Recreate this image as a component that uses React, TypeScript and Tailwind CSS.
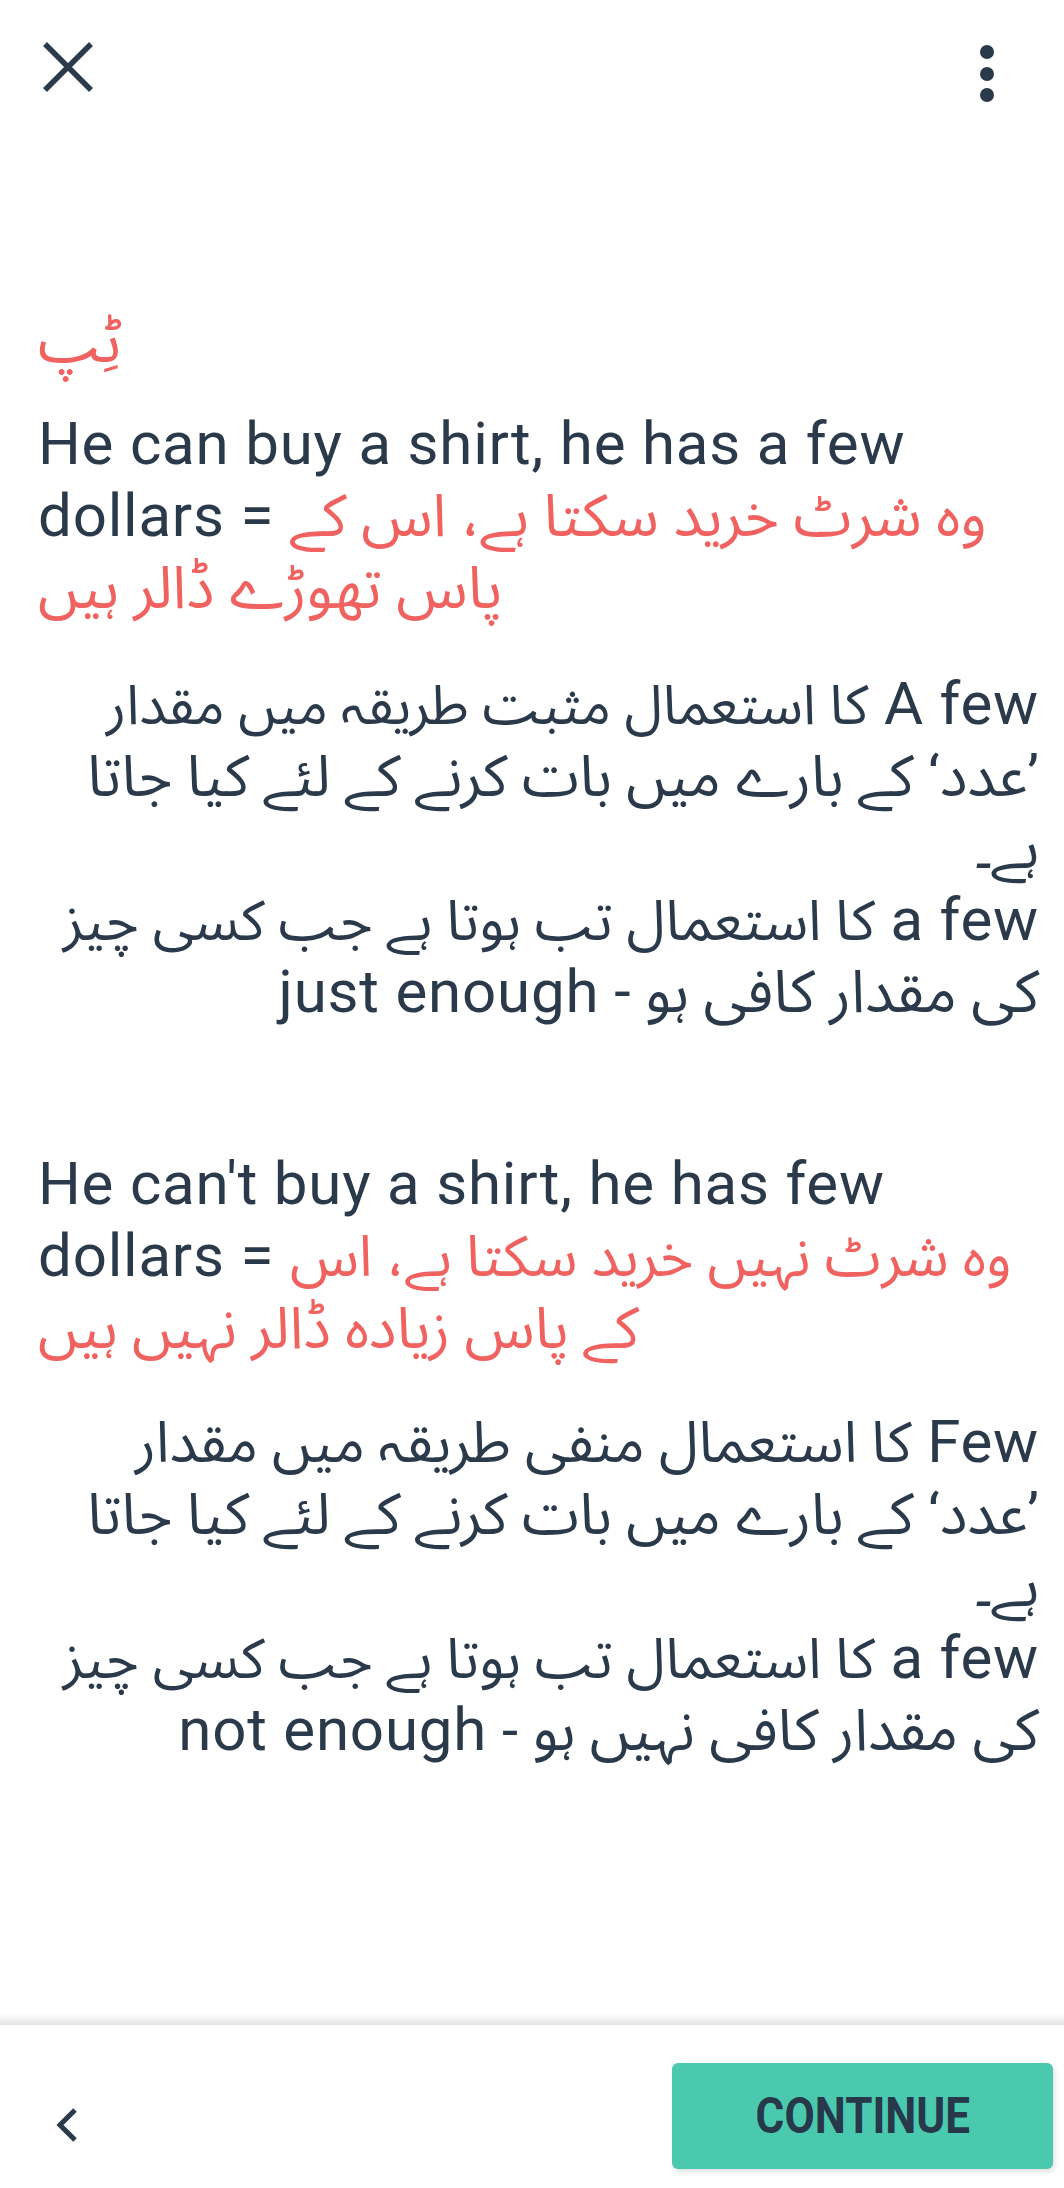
import React from "react";

const FONT = "font-['Roboto','Noto_Sans_Arabic','Noto_Naskh_Arabic','DejaVu_Sans',sans-serif]";
const RED = "text-[#F0625F]";

function Line({ children, rtl = false, className = "" }: { children: React.ReactNode; rtl?: boolean; className?: string }) {
  return (
    <div dir={rtl ? "rtl" : "ltr"} className={`h-[72px] leading-[72px] whitespace-nowrap ${rtl ? "text-right" : "text-left"} ${className}`}>
      {children}
    </div>
  );
}

function U({ children, size, className = "" }: { children: React.ReactNode; size: string; className?: string }) {
  return <span className={`${size} tracking-normal ${className}`}>{children}</span>;
}

export default function App() {
  return (
    <div className={`w-[1064px] h-[2188px] bg-white flex flex-col text-[#2B3A4B] ${FONT}`}>
      {/* header */}
      <div className="h-[140px] flex justify-between items-start shrink-0">
        <div className="pl-[42px] pt-[41px]">
          <svg width="52" height="52" viewBox="0 0 52 52">
            <line x1="3" y1="3" x2="49" y2="49" stroke="#2B3A4B" strokeWidth="5.5" strokeLinecap="butt" />
            <line x1="49" y1="3" x2="3" y2="49" stroke="#2B3A4B" strokeWidth="5.5" strokeLinecap="butt" />
          </svg>
        </div>
        <div className="pr-[70px] pt-[45px] flex flex-col gap-[7.5px]">
          <div className="w-[14px] h-[14px] rounded-full bg-[#2B3A4B]" />
          <div className="w-[14px] h-[14px] rounded-full bg-[#2B3A4B]" />
          <div className="w-[14px] h-[14px] rounded-full bg-[#2B3A4B]" />
        </div>
      </div>

      {/* content */}
      <div className="flex-1 pl-[38px] pr-[25px] pt-[166px] text-[60px] tracking-[0.8px]">
        <div dir="rtl" className={`h-[72px] leading-[72px] text-left ${RED}`}>
          <span dir="rtl">ٹِپ</span>
        </div>

        <div className="mt-[30px]">
          <Line>He can buy a shirt, he has a few</Line>
          <Line>
            dollars = <U size="text-[59px]" className={RED}>وہ شرٹ خرید سکتا ہے، اس کے</U>
          </Line>
          <Line className={RED}>
            <U size="text-[59px]">پاس تھوڑے ڈالر ہیں</U>
          </Line>
        </div>

        <div className="mt-[44px]">
          <Line rtl>
            A few <U size="text-[55px]">کا استعمال مثبت طریقہ میں مقدار</U>
          </Line>
          <Line rtl>
            <U size="text-[58px]">’عدد‘ کے بارے میں بات کرنے کے لئے کیا جاتا</U>
          </Line>
          <Line rtl>
            <U size="text-[58px]">ہے۔</U>
          </Line>
          <Line rtl>
            a few <U size="text-[56px]">کا استعمال تب ہوتا ہے جب کسی چیز</U>
          </Line>
          <Line rtl>
            <U size="text-[59px]">کی مقدار کافی ہو -</U> just enough
          </Line>
        </div>

        <div className="mt-[120px]">
          <Line>He can't buy a shirt, he has few</Line>
          <Line>
            dollars = <U size="text-[57px]" className={RED}>وہ شرٹ نہیں خرید سکتا ہے، اس</U>
          </Line>
          <Line className={RED}>
            <U size="text-[58px]">کے پاس زیادہ ڈالر نہیں ہیں</U>
          </Line>
        </div>

        <div className="mt-[42px]">
          <Line rtl>
            Few <U size="text-[57px]">کا استعمال منفی طریقہ میں مقدار</U>
          </Line>
          <Line rtl>
            <U size="text-[58px]">’عدد‘ کے بارے میں بات کرنے کے لئے کیا جاتا</U>
          </Line>
          <Line rtl>
            <U size="text-[58px]">ہے۔</U>
          </Line>
          <Line rtl>
            a few <U size="text-[56px]">کا استعمال تب ہوتا ہے جب کسی چیز</U>
          </Line>
          <Line rtl>
            <U size="text-[58px]">کی مقدار کافی نہیں ہو -</U> not enough
          </Line>
        </div>
      </div>

      {/* footer */}
      <div className="h-[175px] shrink-0 flex flex-col">
        <div className="h-[12px] bg-gradient-to-b from-white to-[#e4e4e4]" />
        <div className="flex-1 flex items-start justify-between pl-[56px] pr-[11px] pt-[38px]">
          <div className="pt-[44px]">
            <svg width="22" height="36" viewBox="0 0 22 36">
              <polyline points="19,3 4,18 19,33" fill="none" stroke="#2B3A4B" strokeWidth="5" strokeLinejoin="miter" />
            </svg>
          </div>
          <button className="w-[381px] h-[106px] rounded-[6px] bg-[#4AC9AF] shadow-[2px_3px_5px_rgba(0,0,0,0.12)] flex items-center justify-center">
            <span className="inline-block text-[50px] font-bold leading-none text-[#26384A] scale-x-[0.88]">CONTINUE</span>
          </button>
        </div>
      </div>
    </div>
  );
}
